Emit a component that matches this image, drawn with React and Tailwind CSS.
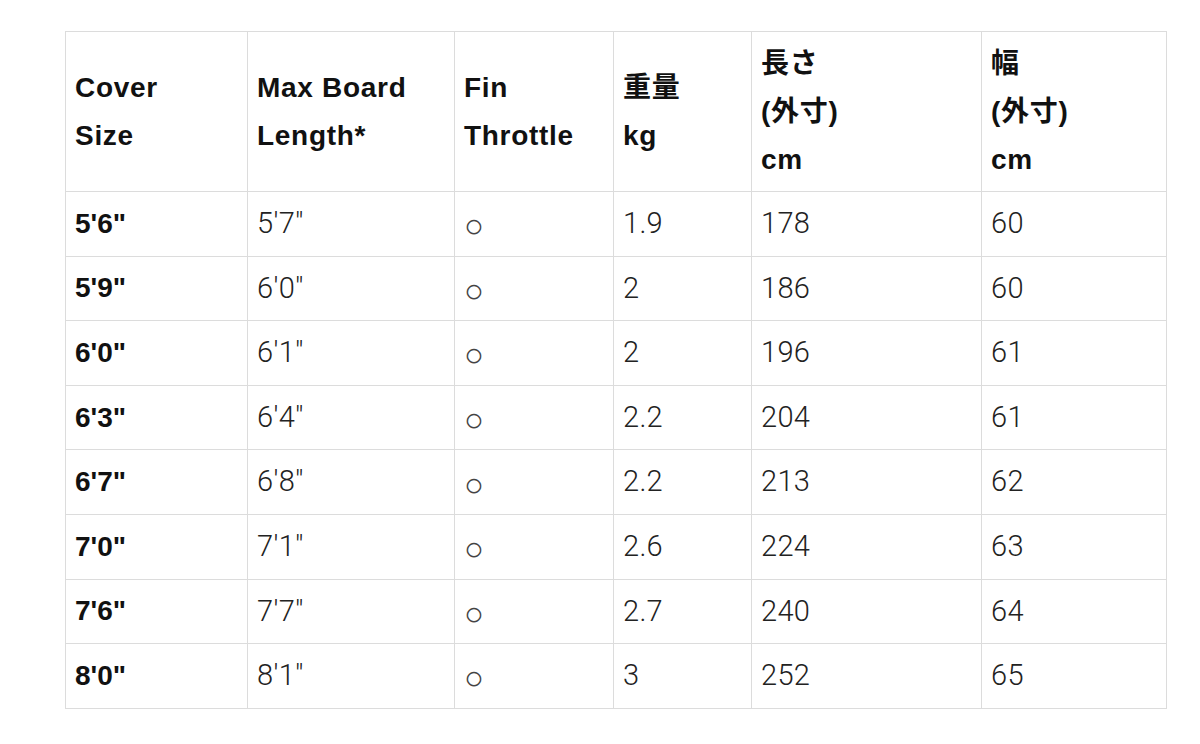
export default function App() {
  const rows = [
    ["5'6\"", "5'7\"", "1.9", "178", "60"],
    ["5'9\"", "6'0\"", "2", "186", "60"],
    ["6'0\"", "6'1\"", "2", "196", "61"],
    ["6'3\"", "6'4\"", "2.2", "204", "61"],
    ["6'7\"", "6'8\"", "2.2", "213", "62"],
    ["7'0\"", "7'1\"", "2.6", "224", "63"],
    ["7'6\"", "7'7\"", "2.7", "240", "64"],
    ["8'0\"", "8'1\"", "3", "252", "65"],
  ];
  const th = "border border-[#dcdcdc] px-[9px] text-left align-middle font-bold text-[#111] leading-[48px] tracking-[0.7px]";
  const td = "border border-[#dcdcdc] px-[9px] align-middle h-[64.6px]";
  const light = " text-[#222] text-[29px] font-light font-['Roboto','Liberation_Sans',sans-serif] tracking-[0.3px]";
  return (
    <div className="w-[1200px] h-[744px] bg-white pt-[31px] pl-[65px]" style={{ fontFamily: '"Liberation Sans", "Noto Sans CJK JP", sans-serif' }}>
      <table className="border-collapse table-fixed w-[1101px] text-[28px]">
        <colgroup>
          <col className="w-[182px]" />
          <col className="w-[207px]" />
          <col className="w-[159px]" />
          <col className="w-[138px]" />
          <col className="w-[230px]" />
          <col className="w-[185px]" />
        </colgroup>
        <thead>
          <tr className="h-[160px]">
            <th className={th}>Cover<br />Size</th>
            <th className={th}>Max Board<br />Length*</th>
            <th className={th}>Fin<br />Throttle</th>
            <th className={th}>重量<br />kg</th>
            <th className={th}>長さ<br />(外寸)<br />cm</th>
            <th className={th}>幅<br />(外寸)<br />cm</th>
          </tr>
        </thead>
        <tbody>
          {rows.map((r, i) => (
            <tr key={i}>
              <td className={td + " font-bold text-[#111]"}>{r[0]}</td>
              <td className={td + light}>{r[1]}</td>
              <td className={td + " text-[#444] text-[33px] leading-none"}>
                <span className="relative top-[2px]">○</span>
              </td>
              <td className={td + light}>{r[2]}</td>
              <td className={td + light}>{r[3]}</td>
              <td className={td + light}>{r[4]}</td>
            </tr>
          ))}
        </tbody>
      </table>
    </div>
  );
}
